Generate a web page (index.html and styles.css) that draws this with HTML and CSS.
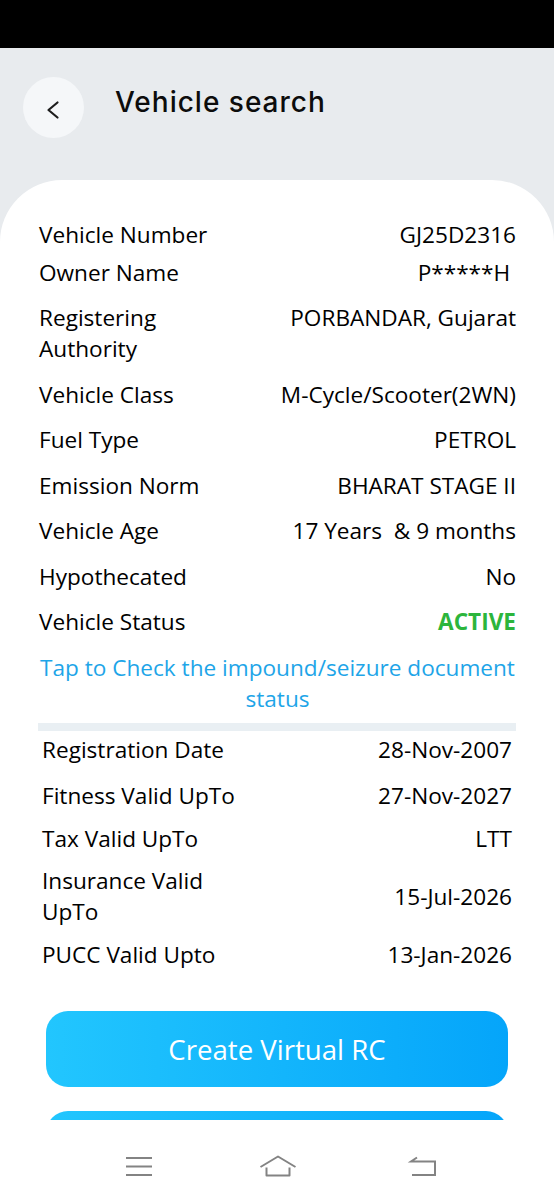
FILE: index.html
```html
<!doctype html>
<html lang="en">
 <head>
  <meta charset="UTF-8">
  <title>Vehicle search</title>
  <link rel="stylesheet" href="styles.css">
 </head>
 <body>
  <div class="phone">
   <div class="status-bar"></div>

   <div class="viewport">
    <!-- header -->
    <div class="top">
     <a class="back" href="#">
      <svg width="61" height="61" viewBox="0 0 61 61"><polyline points="34.5,25.5 25.5,33 34.5,40.5" fill="none" stroke="#1d1d1d" stroke-width="2.2" stroke-linecap="round" stroke-linejoin="round"/></svg>
     </a>
     <h1 class="title">Vehicle search</h1>
    </div>

    <!-- details card -->
    <div class="card">
     <div class="details">
      <div class="row"><span class="label">Vehicle Number</span><span class="value">GJ25D2316</span></div>
      <div class="row row-tight"><span class="label">Owner Name</span><span class="value">P*****H&nbsp;</span></div>
      <div class="row"><span class="label">Registering Authority</span><span class="value">PORBANDAR, Gujarat</span></div>
      <div class="row"><span class="label">Vehicle Class</span><span class="value">M-Cycle/Scooter(2WN)</span></div>
      <div class="row"><span class="label">Fuel Type</span><span class="value">PETROL</span></div>
      <div class="row"><span class="label">Emission Norm</span><span class="value">BHARAT STAGE II</span></div>
      <div class="row"><span class="label">Vehicle Age</span><span class="value">17 Years &nbsp;&amp; 9 months</span></div>
      <div class="row"><span class="label">Hypothecated</span><span class="value">No</span></div>
      <div class="row"><span class="label">Vehicle Status</span><span class="value active">ACTIVE</span></div>
     </div>

     <a class="impound" href="#">Tap to Check the impound/seizure document status</a>
     <div class="divider"></div>

     <div class="validity">
      <div class="row"><span class="label">Registration Date</span><span class="value">28-Nov-2007</span></div>
      <div class="row row-wide"><span class="label">Fitness Valid UpTo</span><span class="value">27-Nov-2027</span></div>
      <div class="row"><span class="label">Tax Valid UpTo</span><span class="value">LTT</span></div>
      <div class="row"><span class="label">Insurance Valid UpTo</span><span class="value">15-Jul-2026</span></div>
      <div class="row"><span class="label">PUCC Valid Upto</span><span class="value">13-Jan-2026</span></div>
     </div>

     <div class="actions">
      <button class="btn">Create Virtual RC</button>
      <button class="btn"></button>
     </div>
    </div>
   </div>

   <!-- system nav -->
   <div class="sysnav">
    <span class="nav-icon">
     <svg width="40" height="40" viewBox="0 0 40 40"><path d="M7 12h26M7 20.5h26M7 29h26" stroke="#838383" stroke-width="2" fill="none"/></svg>
    </span>
    <span class="nav-icon">
     <svg width="40" height="40" viewBox="0 0 40 40"><path d="M2.5 21L20 10.5L37.5 21M8.5 21.5V29.5H31.5V21.5" stroke="#838383" stroke-width="2" fill="none" stroke-linejoin="round"/></svg>
    </span>
    <span class="nav-icon nav-back">
     <svg width="40" height="40" viewBox="0 0 40 40"><path d="M14 11.5L8 15.5H32V29H9" stroke="#838383" stroke-width="2" fill="none"/></svg>
    </span>
   </div>
  </div>
 </body>
</html>
```

FILE: styles.css
```css
/* reset */
*{margin:0;padding:0;box-sizing:border-box}

body{
	width:554px;
	background:#fff;
	font-family:"Open Sans","Noto Sans",sans-serif;
	color:#000;
}

.phone{
	display:flex;
	flex-direction:column;
	height:1200px;
}

.status-bar{
	height:48px;
	background:#000;
}

.viewport{
	height:1072px;
	overflow:hidden;
	background:#e8ebee;
}

/* header */
.top{
	display:flex;
	align-items:center;
	height:132px;
	padding:0 0 14px 23px;
}
.back{
	display:block;
	width:61px;
	height:61px;
	border-radius:50%;
	background:#f5f7f9;
}
.back svg{display:block}
.title{
	margin-left:31px;
	margin-bottom:10px;
	font-family:Inter,"Noto Sans",sans-serif;
	font-size:28px;
	font-weight:500;
	letter-spacing:1px;
	line-height:34px;
	color:#0c0c0c;
}

/* card */
.card{
	min-height:940px;
	background:#fff;
	border-radius:62px 62px 0 0;
	padding:38.5px 38px 0 39px;
}

.row{
	display:flex;
	justify-content:space-between;
	font-size:22.6px;
	line-height:31px;
	margin-top:14.5px;
}
.details .row:first-child{margin-top:0}
.details .row-tight{margin-top:7px}

.label{
	flex:0 0 204px;
}
.value{
	flex:1;
	text-align:right;
}
.active{
	color:#2cb53c;
	font-weight:700;
}

.impound{
	display:block;
	margin:15px -6px 0;
	text-align:center;
	font-size:22.6px;
	line-height:31px;
	color:#1ea5e8;
	text-decoration:none;
}

.divider{
	height:8px;
	margin:8.5px 0 0 -1px;
	background:#e9eff3;
}

.validity{
	padding:0 4px 0 3px;
}
.validity .row{
	align-items:center;
	margin-top:11.5px;
}
.validity .row:first-child{margin-top:3.5px}
.validity .row-wide{margin-top:15px}

/* buttons */
.actions{
	display:flex;
	flex-direction:column;
	gap:24px;
	margin:41.5px 8px 0 7px;
}
.btn{
	height:76px;
	border:none;
	border-radius:22px;
	background:linear-gradient(90deg,#22c6fe,#05a5fa);
	color:#fff;
	font-family:"Open Sans","Noto Sans",sans-serif;
	font-size:27.6px;
}

/* android nav */
.sysnav{
	display:flex;
	height:80px;
	padding:26px 0 0 119px;
	gap:98.5px;
	background:#fff;
}
.nav-icon{
	width:40px;
	height:40px;
}
.nav-icon svg{display:block}
.nav-back{margin-left:7px}
```
